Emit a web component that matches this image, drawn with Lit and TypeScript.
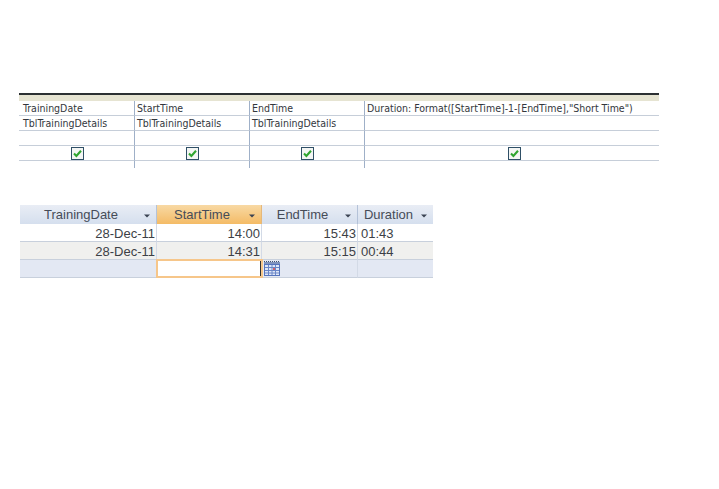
import { LitElement, html, css } from "lit";
import { customElement } from "lit/decorators.js";

const check = html`<svg class="cb" width="13" height="13" viewBox="0 0 13 13"><rect x=".5" y=".5" width="12" height="12" fill="#f4f6f4" stroke="#2f4f66"/><path d="M3 6.5 L5.4 9 L10 3.8" fill="none" stroke="#2fa52f" stroke-width="2.1"/></svg>`;
const arrow = html`<svg class="ar" width="6" height="4" viewBox="0 0 6 4"><path d="M0 0.5H6L3 3.5Z" fill="#3b4352"/></svg>`;
const cal = html`<svg class="cal" width="16" height="15" viewBox="0 0 16 15"><path d="M0 .5H16" stroke="#3f4f70" stroke-dasharray="1 1"/><rect x="0" y="1" width="16" height="3" fill="#7f93bd"/><rect x=".5" y="3.5" width="15" height="11" fill="#dfe7f7" stroke="#5574bd"/><path d="M4.5 4V14M8 4V14M11.5 4V14M1 6.5H15M1 9.5H15M1 12H15" stroke="#6a86c8"/><rect x="9" y="7" width="2" height="2" fill="#cf5f6a"/></svg>`;

@customElement("app-root")
export class AppRoot extends LitElement {
  static styles = css`
    :host { display: block; width: 719px; height: 489px; background: #fff; overflow: hidden; }
    .page { display: flex; flex-direction: column; padding: 93px 0 0 19px; gap: 37px; }
    .qbe { width: 640px; height: 75px; border-top: 2px solid #2c3033; box-sizing: border-box; display: grid;
      grid-template-columns: 116px 115px 115px 294px; grid-template-rows: 6px 15px 15px 15px 15px 7px;
      font: 10.5px/15px "DejaVu Sans", sans-serif; font-stretch: condensed; color: #33373d; }
    .band { grid-column: 1 / -1; background: #e6e4d2; }
    .q { box-sizing: border-box; border-right: 1px solid #9fb0c8; border-bottom: 1px solid #c6ced9; padding-left: 2px; white-space: nowrap; overflow: hidden; display: flex; align-items: center; }
    .q:nth-child(4n + 2) { padding-left: 4px; }
    .q.l { border-right: 0; }
    .q.c { justify-content: center; padding-left: 1px; }
    .q.c.l { padding-left: 5px; }
    .q.e { border-bottom: 0; }
    .cb { display: block; }
    .ds { margin-left: 1px; width: 413px; font: 13px "Liberation Sans", sans-serif; color: #3c3f46; display: grid;
      grid-template-columns: 137px 105px 96px 75px; grid-template-rows: 19px 18px 18px 18px; }
    .h { box-sizing: border-box; background: linear-gradient(#e9edf5, #d5dfee); display: flex; align-items: center; color: #464c58; border-right: 1px solid #b4c2d8; position: relative; }
    .h span { flex: 1; text-align: center; padding-right: 14px; }
    .ar { position: absolute; right: 6px; top: 9px; }
    .h.s { background: linear-gradient(#f8d9a4, #f4bb66); border-right-color: #e6b87a; }
    .h.l { border-right: 0; }
    .d { box-sizing: border-box; border-right: 1px solid #d3dae6; border-bottom: 1px solid #c8d0dc; padding: 1px 1px 0; line-height: 17px; white-space: nowrap; }
    .r { text-align: right; }
    .alt { background: #f0f0ee; }
    .nw { background: #e3e8f3; }
    .d.l { border-right: 0; padding-left: 3px; }
    .cur { background: #fff; border: 2px solid #f6c68a; margin: -1px -1px 0; position: relative; overflow: visible; padding: 0; }
    .cur::after { content: ""; position: absolute; right: 0; top: 0; bottom: 0; width: 1px; background: #333; }
    .cal { position: absolute; left: 106px; top: 0; }
  `;
  render() {
    const cols = [
      ["TrainingDate", "TblTrainingDetails", 1],
      ["StartTime", "TblTrainingDetails", 1],
      ["EndTime", "TblTrainingDetails", 1],
      ['Duration: Format([StartTime]-1-[EndTime],"Short Time")', "", 1],
    ];
    const row = (f: (c: any[]) => unknown, cls = "") =>
      cols.map((c, i) => html`<div class="q ${cls} ${i === 3 ? "l" : ""}">${f(c)}</div>`);
    return html`<div class="page">
      <div class="qbe">
        <div class="band"></div>
        ${row((c) => c[0])}
        ${row((c) => c[1])}
        ${row(() => "")}
        ${row(() => check, "c")}
        ${row(() => "", "e")}
      </div>
      <div class="ds">
        <div class="h"><span>TrainingDate</span>${arrow}</div>
        <div class="h s"><span>StartTime</span>${arrow}</div>
        <div class="h"><span>EndTime</span>${arrow}</div>
        <div class="h l"><span>Duration</span>${arrow}</div>
        <div class="d r">28-Dec-11</div><div class="d r">14:00</div><div class="d r">15:43</div><div class="d l">01:43</div>
        <div class="d r alt">28-Dec-11</div><div class="d r alt">14:31</div><div class="d r alt">15:15</div><div class="d l alt">00:44</div>
        <div class="d nw"></div><div class="d cur">${cal}</div><div class="d nw"></div><div class="d l nw"></div>
      </div>
    </div>`;
  }
}
